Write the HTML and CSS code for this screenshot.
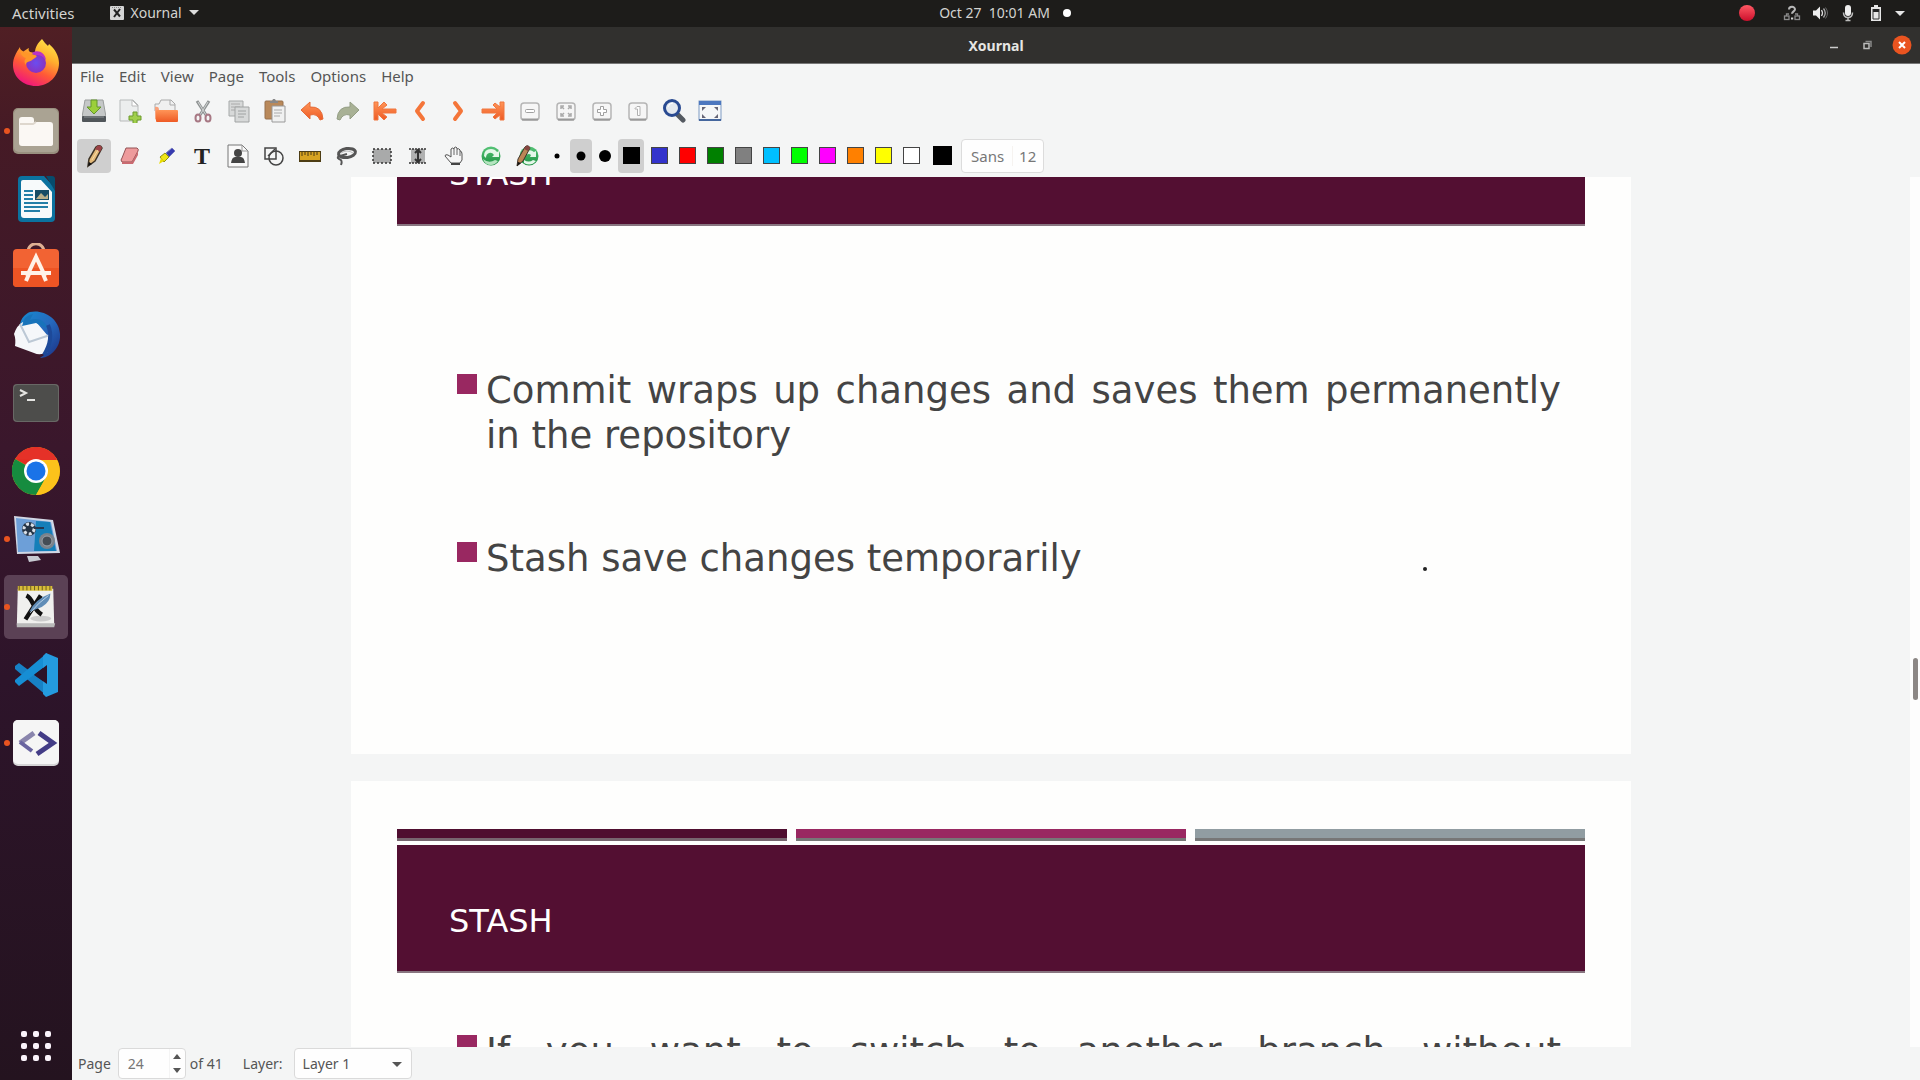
FILE: index.html
```
<!DOCTYPE html>
<html lang="en">
<head>
<meta charset="utf-8">
<title>Xournal</title>
<link rel="stylesheet" href="styles.css">
</head>
<body>
<header class="topbar">
  <div class="topbar-left">
    <button class="top-item">Activities</button>
    <button class="top-item app-menu">
      <svg width="14" height="14" viewBox="0 0 14 14"><rect width="14" height="14" rx="1" fill="#d5d5d5"/><path d="M4 3.500l6 7M10 3L4 11" stroke="#222" stroke-width="2"/><path d="M2 1.500h10" stroke="#888" stroke-dasharray="1 1"/></svg>
      Xournal
      <svg width="10" height="5" viewBox="0 0 10 5"><path d="M0 0h10L5 5z" fill="#ddd"/></svg>
    </button>
  </div>
  <button class="top-item clock"><time>Oct 27&nbsp; 10:01 AM</time><span class="notice-dot"></span></button>
  <div class="tray">
    <svg class="record" width="18" height="18" viewBox="0 0 18 18"><defs><linearGradient id="rec" x2="0" y2="1"><stop stop-color="#ff5964"/><stop offset="1" stop-color="#cb0f2c"/></linearGradient></defs><circle cx="9" cy="9" r="8" fill="url(#rec)"/></svg>
    <svg width="18" height="18" viewBox="0 0 18 18" fill="none" stroke="#8a8a8a" stroke-width="1.300"><path d="M6 5.500C6 2 12 2 12 5.300c0 2-3 2.200-3 4.500" stroke="#b8b8b8" stroke-width="2"/><rect x="1.500" y="12" width="4.500" height="3.500"/><rect x="12" y="12" width="4.500" height="3.500"/><path d="M3.500 12v-2H6M14.500 12v-2H12"/><path d="M8 13.500h2.200v2H8z" fill="#d0d0d0" stroke="none"/></svg>
    <svg width="18" height="18" viewBox="0 0 18 18"><path d="M2 6.500h3l4-4v13l-4-4H2z" fill="#eee"/><path d="M10.500 6q2 3 0 6" fill="none" stroke="#ddd" stroke-width="1.300"/><path d="M12.500 4.500q3.500 4.500 0 9" fill="none" stroke="#aaa" stroke-width="1.300"/><path d="M14.500 3.500q4 5.500 0 11" fill="none" stroke="#666"/></svg>
    <svg width="18" height="18" viewBox="0 0 18 18"><rect x="6" y="1" width="6" height="11" rx="3" fill="#eee"/><path d="M4.500 8.500q0 5 4.500 5t4.500-5M9 13.500V17M6.500 16.500h5" fill="none" stroke="#bbb" stroke-width="1.500"/></svg>
    <svg width="18" height="18" viewBox="0 0 18 18"><path d="M7 1h4v2h3v14H4V3h3z" fill="#e6e6e6"/><path d="M6 5h6v3H6z" fill="#222"/><path d="M6 5v10h6V5" fill="none" stroke="#333"/></svg>
    <svg width="10" height="18" viewBox="0 0 10 18"><path d="M0 7h10L5 12z" fill="#e6e6e6"/></svg>
  </div>
</header>

<div class="desktop">
<nav class="dock" aria-label="Dock">
  <button class="launcher" aria-label="Firefox"><svg viewBox="0 0 48 48"><defs><linearGradient id="ff" x1=".8" y1="0" x2=".3" y2="1"><stop stop-color="#ffe84a"/><stop offset=".35" stop-color="#ffb02e"/><stop offset=".65" stop-color="#ff5a36"/><stop offset="1" stop-color="#ef1280"/></linearGradient><radialGradient id="fp"><stop stop-color="#6a4df0"/><stop offset="1" stop-color="#8a32c0"/></radialGradient></defs><path d="M30 0c2 3 4 5 6 7 0-1 1-1 1-2 6 5 10 12 10 19 0 13-10 23-23 23S1 38 1 26C1 19 4 14 8 8c0 3 1 4 3 5 2-2 4-3 6-4-1 2 0 3 1 4l5 1c0-6 3-10 7-14z" fill="url(#ff)"/><circle cx="24" cy="24" r="10" fill="url(#fp)"/><path d="M8 10c4 4 8 4 15 6 4 1 0 3-3 5-2 2-6 1-6 5-2-2-2-5 0-7-4-1-6-5-6-9z" fill="#ff9728"/><path d="M20 14c5-4 13-1 14 7-3-4-6-5-11-5z" fill="#b833c6"/></svg></button>
  <button class="launcher running" aria-label="Files"><svg viewBox="0 0 48 48"><rect x="1" y="1" width="46" height="46" rx="5" fill="#99907f"/><rect x="2" y="2" width="44" height="43" rx="5" fill="#aaa393"/><path d="M7 13q0-3 3-3h9q3 0 3 3v2h16q3 0 3 3v19q0 2-3 2H10q-3 0-3-3z" fill="#fbf8f4"/><path d="M8 17h13l3-2" fill="none" stroke="#ded7cd" stroke-width="2"/></svg></button>
  <button class="launcher" aria-label="LibreOffice Writer"><svg viewBox="0 0 48 48"><path d="M10 1h22l11 12v30q0 4-4 4H10q-4 0-4-4V5q0-4 4-4z" fill="#0b729f"/><path d="M11 5h18l11 12v23q0 3-3 3H12q-3 0-3-3V7q0-2 2-2z" fill="#f7fafb"/><path d="M34 1h6q3 0 3 3v12z" fill="#064c6d"/><path d="M12 16h9M12 20h9M12 24h9M12 28h24M12 32h24M12 36h16" stroke="#237fa8" stroke-width="2"/><rect x="23" y="15" width="14" height="10" fill="#164c65"/><path d="M24 24l5-6 4 4 3-3v5z" fill="#b9b08a"/></svg></button>
  <button class="launcher" aria-label="Ubuntu Software"><svg viewBox="0 0 48 48"><path d="M16 9c0-11 16-11 16 0" fill="none" stroke="#dfb093" stroke-width="3"/><rect x="1" y="6" width="46" height="38" rx="4" fill="#f26333"/><path d="M1 25h46v15q0 4-4 4H5q-4 0-4-4z" fill="#ed5424"/><path d="M15 33l9-19 9 19" fill="none" stroke="#fff2e8" stroke-width="4"/><path d="M17 31l-3 7M31 31l3 7M9 30h30" stroke="#fff2e8" stroke-width="4"/></svg></button>
  <button class="launcher" aria-label="Thunderbird"><svg viewBox="0 0 48 48"><defs><linearGradient id="tb" x2="1" y2="1"><stop stop-color="#168ad0"/><stop offset=".5" stop-color="#2669bd"/><stop offset="1" stop-color="#1b2f83"/></linearGradient></defs><path d="M18 1C31-2 47 7 48 23c1 14-10 24-20 24 5-3 7-6 8-10L8 14C9 7 13 3 18 1z" fill="url(#tb)"/><path d="M2 23q3-9 9-12l14 1 11 13v16q-8 4-14 1L3 35q1-7-1-12z" fill="#f5f7fa"/><path d="M8 13l9 18 21-7" fill="none" stroke="#bcc8d5" stroke-width="2"/><path d="M10 15q2-11 11-12l-3 6q13-4 18 9L24 12z" fill="#1873ba"/><path d="M36 14q6 14-4 30" stroke="#1d4999" stroke-width="4" fill="none"/></svg></button>
  <button class="launcher" aria-label="Terminal"><svg viewBox="0 0 48 48"><rect x="1" y="5" width="46" height="38" rx="4" fill="#686865"/><rect x="2" y="6" width="44" height="36" rx="4" fill="#4d4d4b"/><path d="M8 11l6 3-6 3M15 21h8" fill="none" stroke="#e5e5e2" stroke-width="2"/></svg></button>
  <button class="launcher" aria-label="Chrome"><svg viewBox="0 0 48 48"><circle cx="24" cy="24" r="24" fill="#fbbd12"/><path d="M24 24L3.200 12A24 24 0 0 1 44.800 12z" fill="#e42e24"/><path d="M3.200 12A24 24 0 0 0 24 48L34.400 30 24 24z" fill="#168c3f"/><path d="M24 13h21A24 24 0 0 1 24 48l10-18z" fill="#fcc21b"/><path d="M3.200 12A24 24 0 0 1 45 13H24z" fill="#e53128"/><circle cx="24" cy="24" r="12" fill="#fff"/><circle cx="24" cy="24" r="9.500" fill="#1a73e8"/></svg></button>
  <button class="launcher running" aria-label="Screen recorder"><svg viewBox="0 0 48 48"><path d="M2 1l39 4 7 33-43 1z" fill="#d1d7e4"/><path d="M4 3l35 4 6 29-39 1z" fill="#6d9fd8"/><path d="M24 6l14 1 6 29H22z" fill="#157fb9"/><circle cx="17" cy="14" r="7" fill="#243244"/><circle cx="17" cy="14" r="5" fill="none" stroke="#d9dfe7" stroke-width="3" stroke-dasharray="3 2"/><path d="M22 13h10" stroke="#263850" stroke-width="2"/><circle cx="35" cy="26" r="8" fill="#7b838c"/><circle cx="35" cy="26" r="5" fill="#454d56" stroke="#9ba2aa"/><path d="M15 41h11l3 4-12 2z" fill="#c7c9d1"/></svg></button>
  <button class="launcher running active" aria-label="Xournal"><svg viewBox="0 0 48 48"><path d="M5 5h37l1 38H4z" fill="#f0f0ee"/><path d="M4 41h40l-1 4H4z" fill="#b9b9b9"/><path d="M5 2h36v5H5z" fill="#d8bd39"/><path d="M6 4h35" stroke="#695a20" stroke-width="5" stroke-dasharray="1 3"/><ellipse cx="29" cy="36" rx="11" ry="3" fill="#ccc"/><path d="M14 12q4 2 7 9t9 11M29 12L13 37" fill="none" stroke="#111" stroke-width="4.500"/><path d="M17 29q6-13 22-19 0 9-9 14l-10 4z" fill="#608db7"/><path d="M18 30q9-11 19-18" fill="none" stroke="#bdd4e8"/></svg></button>
  <button class="launcher" aria-label="Visual Studio Code"><svg viewBox="0 0 48 48"><path d="M3 15l4-3 28 21v12L3 18z" fill="#1781c5"/><path d="M3 31l4 4 28-21V2L3 29z" fill="#168ed4"/><path d="M34 2l12 5v34l-12 5-3-3V5z" fill="#249bdf"/><path d="M35 14v19L22 24z" fill="#2c1228"/></svg></button>
  <button class="launcher running" aria-label="Code editor"><svg viewBox="0 0 48 48"><rect x="1" y="1" width="46" height="46" rx="5" fill="#d5d5d6"/><rect x="1" y="1" width="46" height="44" rx="5" fill="#f5f5f5"/><path d="M22 14L8 24" stroke="#8a85ad" stroke-width="5"/><path d="M8 23l12 9" stroke="#6964a0" stroke-width="4"/><path d="M27 14l14 10-16 11" fill="none" stroke="#433c86" stroke-width="5"/></svg></button>
  <button class="launcher show-apps" aria-label="Show applications"><svg viewBox="0 0 48 48" fill="#faf3fa"><rect x="9" y="9" width="6" height="6" rx="2"/><rect x="21" y="9" width="6" height="6" rx="2"/><rect x="33" y="9" width="6" height="6" rx="2"/><rect x="9" y="21" width="6" height="6" rx="2"/><rect x="21" y="21" width="6" height="6" rx="2"/><rect x="33" y="21" width="6" height="6" rx="2"/><rect x="9" y="33" width="6" height="6" rx="2"/><rect x="21" y="33" width="6" height="6" rx="2"/><rect x="33" y="33" width="6" height="6" rx="2"/></svg></button>
</nav>

<main class="window">
  <div class="titlebar">
    <h1 class="window-title">Xournal</h1>
    <div class="window-buttons">
      <button aria-label="Minimise"><svg width="20" height="20" viewBox="0 0 20 20"><path d="M6 12.500h8" stroke="#ccc" stroke-width="1.500"/></svg></button>
      <button aria-label="Restore"><svg width="20" height="20" viewBox="0 0 20 20" fill="none" stroke="#bbb" stroke-width="1.500"><rect x="6" y="8.500" width="5" height="5"/><path d="M7.500 6.500H13v5.500" stroke="#888"/></svg></button>
      <button aria-label="Close"><svg width="20" height="20" viewBox="0 0 20 20"><circle cx="10" cy="10" r="9.500" fill="#ea5420"/><path d="M7 7l6 6M13 7l-6 6" stroke="#fff" stroke-width="2"/></svg></button>
    </div>
  </div>

  <nav class="menubar">
    <button>File</button><button>Edit</button><button>View</button><button>Page</button><button>Tools</button><button>Options</button><button>Help</button>
  </nav>

  <svg width="0" height="0" class="defs"><defs>
    <linearGradient id="or" x2="0" y2="1"><stop stop-color="#ff9558"/><stop offset="1" stop-color="#ee5a24"/></linearGradient>
    <linearGradient id="gn" x2="0" y2="1"><stop stop-color="#56c477"/><stop offset="1" stop-color="#1d9141"/></linearGradient>
  </defs></svg>

  <div class="toolbar" role="toolbar" aria-label="Main">
    <button class="tool" aria-label="Save"><svg viewBox="0 0 24 24"><path d="M3 1h18l3 17H0z" fill="#c5c8c8" stroke="#9a9d9d"/><rect x="0" y="17" width="24" height="6" rx="1" fill="#50565a"/><path d="M2 18h20" stroke="#8b9093"/><path d="M9 1h6v7h4l-7 7-7-7h4z" fill="#9bcf3a" stroke="#63962a"/></svg></button>
    <button class="tool" aria-label="New"><svg viewBox="0 0 24 24"><path d="M2 1h13l5 5v16H2z" fill="#eceeee" stroke="#b7baba"/><path d="M14 1l6 6h-6z" fill="#fff" stroke="#bbb"/><path d="M15 13h4v4h4v4h-4v4h-4v-4h-4v-4h4z" fill="#a0cf4b" stroke="#6c9b2d"/></svg></button>
    <button class="tool" aria-label="Open"><svg viewBox="0 0 24 24"><path d="M1 5h4l2-4h10l4 4v7H1z" fill="#f0f0f0" stroke="#aaa"/><path d="M16 1v5h5" fill="none" stroke="#aaa"/><path d="M1 8q4-1 4 3v12l-4-3z" fill="#f8a27c"/><rect x="2" y="11" width="22" height="12" rx="1" fill="url(#or)"/></svg></button>
    <span class="sep"></span>
    <button class="tool" aria-label="Cut"><svg viewBox="0 0 24 24" fill="none"><path d="M6 2l9 14M18 2L9 16" stroke="#8f9393" stroke-width="3"/><path d="M7 3l8 13M17 3L9 16" stroke="#d0d3d3"/><ellipse cx="7" cy="19" rx="2.500" ry="3.500" stroke="#a77884" stroke-width="2"/><ellipse cx="17" cy="19" rx="2.500" ry="3.500" stroke="#a77884" stroke-width="2"/></svg></button>
    <button class="tool" aria-label="Copy"><svg viewBox="0 0 24 24"><path d="M2 2h14v15H2z" fill="#d7d9d9" stroke="#a6a9a9"/><path d="M4 5h9M4 8h9M4 11h4" stroke="#aaa"/><path d="M8 8h14v15H8z" fill="#d7d9d9" stroke="#a0a3a3"/><path d="M11 12h8M11 15h8M11 18h6" stroke="#9fa2a2"/></svg></button>
    <button class="tool" aria-label="Paste"><svg viewBox="0 0 24 24"><rect x="2" y="2" width="18" height="18" rx="1" fill="#b9895a" stroke="#97704c"/><path d="M7 4V2h2l1-2h2l1 2h2v2z" fill="#888"/><path d="M9 7h13v16H9z" fill="#f0f1f1" stroke="#999"/><path d="M11 11h8M11 14h8M11 17h6" stroke="#aaa"/></svg></button>
    <span class="sep"></span>
    <button class="tool" aria-label="Undo"><svg viewBox="0 0 24 24"><path d="M1 11L10 3v5q12-1 13 12l-3 1q-3-7-10-5v4z" fill="url(#or)" stroke="#e46a36"/></svg></button>
    <button class="tool" aria-label="Redo"><svg viewBox="0 0 24 24"><path d="M23 11L14 3v5Q2 7 1 20l3 1q3-7 10-5v4z" fill="#a8b195" stroke="#939d83"/></svg></button>
    <span class="sep"></span>
    <button class="tool" aria-label="First page"><svg viewBox="0 0 24 24"><path d="M1 3h4v6l6-6 3 3-5 4h14v4H9l5 4-3 3-6-6v6H1z" fill="url(#or)" stroke="#f0763f"/></svg></button>
    <button class="tool" aria-label="Previous page"><svg viewBox="0 0 24 24"><path d="M14 4L8 12l6 8" fill="none" stroke="#f47539" stroke-width="4" stroke-linecap="round" stroke-linejoin="round"/></svg></button>
    <button class="tool" aria-label="Next page"><svg viewBox="0 0 24 24"><path d="M10 4l6 8-6 8" fill="none" stroke="#f47539" stroke-width="4" stroke-linecap="round" stroke-linejoin="round"/></svg></button>
    <button class="tool" aria-label="Last page"><svg viewBox="0 0 24 24"><path d="M23 3h-4v5l-5-4-2 2 4 4H1v4h15l-4 4 2 2 5-4v5h4z" fill="url(#or)" stroke="#f0763f"/></svg></button>
    <span class="sep"></span>
    <button class="tool" aria-label="Zoom out"><svg viewBox="0 0 24 24"><rect x="3" y="4" width="18" height="17" rx="3" fill="#f6f6f6" stroke="#b5b5b5" stroke-width="1.500"/><path d="M4 20.500h16" stroke="#999" stroke-width="2"/><rect x="7.500" y="10.500" width="9" height="3" rx="1" fill="#fff" stroke="#a0a0a0"/></svg></button>
    <button class="tool" aria-label="Page width"><svg viewBox="0 0 24 24"><rect x="3" y="4" width="18" height="17" rx="3" fill="#f6f6f6" stroke="#b5b5b5" stroke-width="1.500"/><path d="M4 20.500h16" stroke="#999" stroke-width="2"/><path d="M7 10V7h3M14 7h3v3M7 14v3h3M14 17h3v-3M8 8l2 2M16 8l-2 2M8 16l2-2M16 16l-2-2" fill="none" stroke="#aaa" stroke-width="1.500"/></svg></button>
    <button class="tool" aria-label="Zoom in"><svg viewBox="0 0 24 24"><rect x="3" y="4" width="18" height="17" rx="3" fill="#f6f6f6" stroke="#b5b5b5" stroke-width="1.500"/><path d="M4 20.500h16" stroke="#999" stroke-width="2"/><path d="M10.500 7.500h3v3h3v3h-3v3h-3v-3h-3v-3h3z" fill="#fff" stroke="#a0a0a0"/></svg></button>
    <button class="tool" aria-label="Normal size"><svg viewBox="0 0 24 24"><rect x="3" y="4" width="18" height="17" rx="3" fill="#f6f6f6" stroke="#b5b5b5" stroke-width="1.500"/><path d="M4 20.500h16" stroke="#999" stroke-width="2"/><path d="M9 9.500l2-2h3v9h-2.500V10H9z" fill="#fff" stroke="#b0b0b0"/></svg></button>
    <button class="tool" aria-label="Set zoom"><svg viewBox="0 0 24 24"><path d="M15 15l6 6" stroke="#545a61" stroke-width="5" stroke-linecap="round"/><circle cx="10" cy="9" r="7.500" fill="#e4e9ef" stroke="#294a91" stroke-width="3"/><path d="M6 8q1-4 5-4" stroke="#fff" fill="none"/></svg></button>
    <button class="tool" aria-label="Fullscreen"><svg viewBox="0 0 24 24"><rect x="1" y="2" width="22" height="19" fill="#f5f7f8" stroke="#7f9bc4"/><path d="M1 2h22v4H1z" fill="#4b77bf"/><path d="M1 21h22" stroke="#45679e" stroke-width="2"/><path d="M4 12V8h4zM16 8h4v4zM4 15v4h4zM20 15v4h-4z" fill="#667"/></svg></button>
  </div>

  <div class="toolbar" role="toolbar" aria-label="Drawing">
    <button class="tool pressed" aria-label="Pen"><svg viewBox="0 0 24 24"><path d="M6 22l1-7L14 3q4-3 6 1l-7 13z" fill="#e3b978" stroke="#3c3225" stroke-width="1.500"/><path d="M13 5l2-3q4-2 5 2l-2 4z" fill="#9b4246"/><path d="M6 22l1-4 3 2z" fill="#111"/><path d="M10 16l6-10" stroke="#f8dca6"/></svg></button>
    <button class="tool" aria-label="Eraser"><svg viewBox="0 0 24 24"><path d="M8 4h11q2 1 1 3l-6 11H4q-2-2 0-4z" fill="#ee9b9c" stroke="#925355"/><path d="M14 18l6-11v4l-5 9H4v-2z" fill="#c96a70"/></svg></button>
    <button class="tool" aria-label="Highlighter"><svg viewBox="0 0 24 24"><path d="M12 9l6-5 3 3-6 6z" fill="#373bb0" stroke="#777bc0"/><path d="M6 13l5-4 4 4-5 5z" fill="#efe516" stroke="#909014"/><path d="M5 20l2-6 3 3z" fill="#e9dc00"/></svg></button>
    <button class="tool bold-t" aria-label="Text">T</button>
    <button class="tool" aria-label="Image"><svg viewBox="0 0 24 24"><path d="M2 1h14l6 6v16H2z" fill="#f9f9f9" stroke="#777"/><path d="M16 1v6h6" fill="none" stroke="#999"/><circle cx="12" cy="9" r="4" fill="#444"/><path d="M5 19q1-7 5-6h4q4-1 5 6z" fill="#444"/></svg></button>
    <button class="tool" aria-label="Shape recognizer"><svg viewBox="0 0 24 24" fill="none" stroke="#444" stroke-width="1.500"><rect x="3" y="4" width="11" height="11"/><circle cx="14" cy="14" r="7"/><path d="M6 12l7-7"/></svg></button>
    <button class="tool" aria-label="Ruler"><svg viewBox="0 0 24 24"><rect x="1" y="7" width="22" height="11" fill="#4d3d14"/><rect x="2" y="8" width="20" height="8" fill="#d7a321"/><path d="M4 8v4M7 8v3M10 8v4M13 8v3M16 8v4M19 8v3" stroke="#493915"/></svg></button>
    <button class="tool" aria-label="Select region"><svg viewBox="0 0 24 24" fill="none"><ellipse cx="13" cy="9" rx="8.500" ry="4.500" transform="rotate(-8 13 9)" stroke="#555" stroke-width="3"/><path d="M6 12q-4 1-1 3 4 1 2 6M6 12l7-2" stroke="#555" stroke-width="2"/><path d="M7 9q6-4 12 0" stroke="#bbb"/></svg></button>
    <button class="tool" aria-label="Select rectangle"><svg viewBox="0 0 24 24"><rect x="3" y="5" width="18" height="14" fill="#a9aaaa" stroke="#333" stroke-width="1.500" stroke-dasharray="2 2"/></svg></button>
    <button class="tool" aria-label="Vertical space"><svg viewBox="0 0 24 24"><rect x="5" y="5" width="14" height="14" fill="#b0b1b1"/><path d="M3 5h18M3 19h18" stroke="#333" stroke-width="1.500" stroke-dasharray="2 1"/><path d="M12 6v12M9 9l3-3 3 3M9 15l3 3 3-3" fill="none" stroke="#333" stroke-width="2"/></svg></button>
    <button class="tool" aria-label="Hand"><svg viewBox="0 0 24 24"><path d="M9 19L3 12q0-2 3-1l3 2V5q2-2 3 0V4q2-2 3 0v1q2-1 3 1v1q2 0 2 3v6l-2 3z" fill="#f6f6f6" stroke="#555"/><path d="M12 5v6M15 5v6M18 7v5" stroke="#666" fill="none"/><path d="M9 20h9" stroke="#444" stroke-width="2"/></svg></button>
    <span class="sep"></span>
    <button class="tool" aria-label="Default tool"><svg viewBox="0 0 24 24"><circle cx="12" cy="12" r="9.500" fill="url(#gn)"/><path d="M5 12q0-7 7-7 4 0 6 3l2-1v6h-7l2-2q-2-3-5-2-3 1-3 5z" fill="#e4f7e9"/><path d="M4 15q6 5 12 1l3 1q-3 4-7 4-6 0-8-6z" fill="#b5e5c0"/></svg></button>
    <button class="tool" aria-label="Default pen"><svg viewBox="0 0 24 24"><circle cx="14" cy="12" r="9.500" fill="url(#gn)"/><path d="M11 9q3-5 8-1l2-1v6h-6l1-2q-2-2-5 0zM9 16q5 3 9 0l3 1q-5 6-12 2z" fill="#e4f7e9"/><path d="M2 22l1-7L10 3q3-3 5 1L8 17z" fill="#bb8656" stroke="#40352b"/><path d="M9 5l2-3q3-1 4 2l-2 3z" fill="#864641"/><path d="M2 22l1-4 3 1z" fill="#111"/></svg></button>
    <button class="weight" aria-label="Fine"><svg width="12" height="12" viewBox="0 0 12 12"><circle cx="6" cy="6" r="2.500"/></svg></button>
    <button class="weight pressed" aria-label="Medium"><svg width="12" height="12" viewBox="0 0 12 12"><circle cx="6" cy="6" r="4.500"/></svg></button>
    <button class="weight" aria-label="Thick"><svg width="12" height="12" viewBox="0 0 12 12"><circle cx="6" cy="6" r="6"/></svg></button>
    <button class="color pressed" aria-label="Black"><span class="swatch black"></span></button>
    <button class="color" aria-label="Blue"><span class="swatch blue"></span></button>
    <button class="color" aria-label="Red"><span class="swatch red"></span></button>
    <button class="color" aria-label="Green"><span class="swatch green"></span></button>
    <button class="color" aria-label="Gray"><span class="swatch gray"></span></button>
    <button class="color" aria-label="Light blue"><span class="swatch sky"></span></button>
    <button class="color" aria-label="Light green"><span class="swatch lime"></span></button>
    <button class="color" aria-label="Magenta"><span class="swatch magenta"></span></button>
    <button class="color" aria-label="Orange"><span class="swatch orange"></span></button>
    <button class="color" aria-label="Yellow"><span class="swatch yellow"></span></button>
    <button class="color" aria-label="White"><span class="swatch white"></span></button>
    <button class="color current" aria-label="Current color"><span class="swatch black large"></span></button>
    <button class="font-button" aria-label="Font"><span class="font-name">Sans</span><span class="font-size">12</span></button>
  </div>

  <div class="canvas">
    <div class="pages">
      <article class="slide scrolled">
        <div class="stripes"><span class="plum"></span><span class="rose"></span><span class="slate"></span></div>
        <h2 class="banner">STASH</h2>
        <ul class="points spacious">
          <li>Commit wraps up changes and saves them permanently in the repository</li>
          <li>Stash save changes temporarily</li>
        </ul>
        <span class="ink-dot"></span>
      </article>
      <article class="slide">
        <div class="stripes"><span class="plum"></span><span class="rose"></span><span class="slate"></span></div>
        <h2 class="banner">STASH</h2>
        <ul class="points">
          <li class="full-line">If you want to switch to another branch without</li>
        </ul>
      </article>
    </div>
    <div class="scrollbar"><div class="thumb"></div></div>
  </div>

  <footer class="statusbar">
    <label for="page">Page</label>
    <div class="spinner">
      <input id="page" type="text" inputmode="numeric" value="24">
      <div class="steps">
        <button aria-label="Next"><svg width="8" height="5" viewBox="0 0 8 5"><path d="M0 5h8L4 0z"/></svg></button>
        <button aria-label="Previous"><svg width="8" height="5" viewBox="0 0 8 5"><path d="M0 0h8L4 5z"/></svg></button>
      </div>
    </div>
    <span>of 41</span>
    <label class="layer-label" for="layer">Layer:</label>
    <div class="select">
      <select id="layer"><option>Layer 1</option></select>
      <svg width="10" height="5" viewBox="0 0 10 5"><path d="M0 0h10L5 5z"/></svg>
    </div>
  </footer>
</main>
</div>
</body>
</html>
```
FILE: styles.css
```
* { box-sizing: border-box; }

body {
  margin: 0;
  height: 100vh;
  display: flex;
  flex-direction: column;
  overflow: hidden;
  font: 15px/20px "Noto Sans", "Open Sans", sans-serif;
  color: #555;
  background: #f4f5f5;
}

button, input, select { font: inherit; color: inherit; }
button { border: 0; padding: 0; background: none; }
svg { display: block; flex: none; }
.defs { position: absolute; }

/* Desktop top bar */
.topbar {
  flex: none;
  display: grid;
  grid-template-columns: 1fr auto 1fr;
  align-items: center;
  height: 27px;
  padding: 0 15px 2px 12px;
  background: #1d1c1a;
  color: #d3d3d0;
}
.topbar-left { display: flex; gap: 35px; }
.top-item { display: flex; align-items: center; }
.app-menu { gap: 7px; font-size: 14px; }
.clock { gap: 13px; padding-left: 93px; font-size: 14px; }
.notice-dot { width: 8px; height: 8px; border-radius: 50%; background: #fff; }
.tray { display: flex; justify-content: flex-end; align-items: center; gap: 10px; }
.record { margin-right: 17px; }

.desktop { flex: 1; display: flex; min-height: 0; }

/* Dock */
.dock {
  flex: none;
  width: 72px;
  display: flex;
  flex-direction: column;
  padding: 2px 4px 0;
  background: linear-gradient(#501f24, #451a25 10%, #3a172c 40%, #2d142a 62%, #24131f);
}
.launcher {
  flex: none;
  position: relative;
  display: grid;
  place-items: center;
  height: 64px;
  margin: 2px 0;
  border-radius: 5px;
}
.launcher svg { width: 48px; height: 48px; }
.launcher.active { background: #5b4155; }
.launcher.active svg { width: 46px; height: 46px; }
.launcher.running::before {
  content: "";
  position: absolute;
  left: 0;
  top: 29px;
  width: 6px;
  height: 6px;
  border-radius: 50%;
  background: #e95420;
}
.show-apps { margin-top: auto; }

/* Window frame */
.window { flex: 1; min-width: 0; display: flex; flex-direction: column; }
.titlebar {
  flex: none;
  display: grid;
  grid-template-columns: 1fr auto 1fr;
  align-items: center;
  height: 37px;
  padding: 0 8px;
  border-bottom: 1px solid #777;
  background: #31302e;
  color: #e6e6e3;
}
.window-title { grid-column: 2; margin: 0; padding-top: 2px; font-size: 14px; line-height: 20px; }
.window-buttons { display: flex; justify-content: flex-end; gap: 14px; }

.menubar { flex: none; display: flex; gap: 15px; height: 24px; padding-left: 8px; }

.toolbar { flex: none; display: flex; align-items: center; height: 46px; padding-left: 4px; }
.toolbar + .toolbar { height: 43px; }
.sep { width: 1px; }
.tool { width: 36px; height: 34px; display: grid; place-items: center; }
.tool svg { width: 24px; height: 24px; }
.tool.pressed { width: 34px; margin: 0 1px; }
.pressed { border-radius: 4px; background: #cfcfcf; }
.bold-t { font: bold 24px/34px "Liberation Serif", serif; color: #222; }
.weight { width: 24px; height: 34px; display: grid; place-items: center; }
.weight.pressed { width: 22px; margin: 0 1px; }
.color { width: 28px; height: 34px; display: grid; place-items: center; }
.color.pressed { width: 26px; margin: 0 1px; }
.color.current { width: 34px; margin-right: 2px; }

.swatch { width: 17px; height: 17px; border: 1px solid #444; }
.swatch.large { width: 19px; height: 19px; }
.black { background: #000; border-color: #000; }
.blue { background: #3333cc; }
.red { background: #f00; }
.green { background: #008000; }
.gray { background: #808080; }
.sky { background: #00c0ff; }
.lime { background: #0f0; }
.magenta { background: #f0f; }
.orange { background: #ff8000; }
.yellow { background: #ff0; }
.white { background: #fff; }

.font-button {
  display: flex;
  align-items: center;
  height: 34px;
  padding: 0 7px 0 9px;
  border: 1px solid #dcdcdc;
  border-radius: 4px;
  background: #fefefe;
  color: #777;
}
.font-name { padding-right: 8px; border-right: 1px solid #f6f3f0; }
.font-size { padding-left: 6px; }

/* Document area */
.canvas { flex: 1; min-height: 0; display: flex; overflow: hidden; }
.pages { flex: 1; display: flex; flex-direction: column; align-items: center; gap: 27px; }
.scrollbar { flex: none; width: 10px; background: #fdfdfd; }
.thumb { width: 5px; height: 42px; margin: 481px 3px 0; border-radius: 3px; background: #8c8785; }

.slide {
  flex: none;
  position: relative;
  width: 1280px;
  height: 720px;
  padding: 48px 46px 0;
  background: #fefefd;
  font-family: "DejaVu Sans", sans-serif;
}
.slide.scrolled { margin-top: -143px; }
.stripes { display: grid; grid-template-columns: repeat(3, 1fr); gap: 9px; margin-bottom: 4px; }
.stripes span { height: 12px; border-bottom: 3px solid #777; }
.stripes .plum { background: #4f0e30; border-color: #77656f; }
.rose { background: #992861; }
.slate { background: #919da2; }
.banner {
  height: 128px;
  margin: 0;
  padding: 56px 52px 0;
  border-bottom: 2px solid #887580;
  background: #530f32;
  color: #fff;
  font-size: 32px;
  font-weight: 400;
  line-height: 40px;
}
.points {
  display: grid;
  gap: 78px;
  margin: 0;
  padding: 56px 24px 0 89px;
  list-style: none;
  color: #444;
  font-size: 37px;
  line-height: 45px;
  text-align: justify;
}
.points.spacious { padding-top: 142px; }
.points li { position: relative; }
.points li::before {
  content: "";
  position: absolute;
  left: -29px;
  top: 6px;
  width: 20px;
  height: 20px;
  background: #992861;
}
.full-line { text-align-last: justify; }
.ink-dot {
  position: absolute;
  left: 1072px;
  top: 533px;
  width: 4px;
  height: 4px;
  border-radius: 50%;
  background: #222;
}

/* Status bar */
.statusbar { flex: none; display: flex; align-items: center; height: 33px; padding: 0 6px; font-size: 14px; }
.spinner, .select { display: flex; height: 31px; border: 1px solid #dadada; border-radius: 4px; background: #fefefe; }
.spinner { width: 68px; margin: 0 4px 0 7px; }
.spinner input { width: 50px; padding: 0 9px; border: 0; background: none; color: #777; }
.steps { flex: 1; display: grid; grid-template-rows: 1fr 1fr; border-left: 1px solid #f4f4f4; }
.steps button { display: grid; place-items: center; }
.steps svg, .select svg { fill: #555; }
.layer-label { margin-left: 20px; }
.select { position: relative; align-items: center; width: 118px; margin-left: 11px; }
.select select { appearance: none; width: 100%; height: 100%; padding: 0 8px; border: 0; background: none; }
.select svg { position: absolute; right: 9px; top: 13px; pointer-events: none; }
```
